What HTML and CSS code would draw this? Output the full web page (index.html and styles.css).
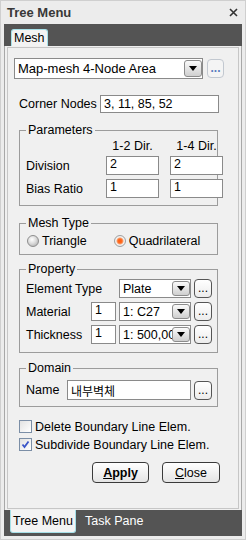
FILE: index.html
```html
<!DOCTYPE html>
<html>
<head>
<meta charset="utf-8">
<link rel="stylesheet" href="styles.css">
</head>
<body>
<div class="window">
  <div class="titlebar">
    <span class="title">Tree Menu</span>
    <svg class="close" width="9" height="9" viewBox="0 0 9 9"><path d="M1 1L8 8M8 1L1 8" stroke="#333" stroke-width="1.6" fill="none"/></svg>
  </div>
  <div class="frame">
    <div class="tabstrip-top"><div class="tab-top">Mesh</div></div>
    <div class="panel">
      <div class="panel-inner">
        <div class="combo-row">
          <div class="combo combo-main"><span class="combo-text">Map-mesh 4-Node Area</span><span class="drop"><i class="tri"></i></span></div>
          <span class="dots dots-disabled">...</span>
        </div>
        <div class="corner-row">
          <span class="corner-label">Corner Nodes</span>
          <span class="input corner-input">3, 11, 85, 52</span>
        </div>

        <fieldset class="group group-params">
          <legend>Parameters</legend>
          <div class="params-body">
            <span></span><span class="dir">1-2 Dir.</span><span class="dir">1-4 Dir.</span>
            <span class="plabel">Division</span><span class="input pinput">2</span><span class="input pinput">2</span>
            <span class="plabel">Bias Ratio</span><span class="input pinput">1</span><span class="input pinput">1</span>
          </div>
        </fieldset>

        <fieldset class="group group-type">
          <legend>Mesh Type</legend>
          <div class="type-body">
            <span class="radio"></span><span class="rtext">Triangle</span>
            <span class="radio on radio-second"></span><span class="rtext">Quadrilateral</span>
          </div>
        </fieldset>

        <fieldset class="group group-prop">
          <legend>Property</legend>
          <div class="prop-body">
            <div class="prow">
              <span class="prlabel wide">Element Type</span>
              <div class="combo combo-small"><span class="combo-text">Plate</span><span class="drop"><i class="tri"></i></span></div>
              <span class="dots">...</span>
            </div>
            <div class="prow">
              <span class="prlabel">Material</span>
              <span class="input small-input">1</span>
              <div class="combo combo-small"><span class="combo-text">1: C27</span><span class="drop"><i class="tri"></i></span></div>
              <span class="dots">...</span>
            </div>
            <div class="prow">
              <span class="prlabel">Thickness</span>
              <span class="input small-input">1</span>
              <div class="combo combo-small"><span class="combo-text">1: 500,00</span><span class="drop"><i class="tri"></i></span></div>
              <span class="dots">...</span>
            </div>
          </div>
        </fieldset>

        <fieldset class="group group-domain">
          <legend>Domain</legend>
          <div class="domain-body">
            <span class="dlabel">Name</span>
            <span class="input name-input">내부벽체</span>
            <span class="dots">...</span>
          </div>
        </fieldset>

        <div class="check-row first">
          <span class="check"></span><span class="ctext">Delete Boundary Line Elem.</span>
        </div>
        <div class="check-row">
          <span class="check checked"><svg width="11" height="11" viewBox="0 0 11 11"><path d="M2.5 5.5L4.5 8L8.5 2.5" stroke="#3a55c8" stroke-width="1.8" fill="none"/></svg></span><span class="ctext">Subdivide Boundary Line Elem.</span>
        </div>

        <div class="button-row">
          <span class="btn btn-apply"><u>A</u>pply</span>
          <span class="btn btn-close"><u>C</u>lose</span>
        </div>
      </div>
    </div>
    <div class="tabstrip-bottom">
      <div class="tab-bottom">Tree Menu</div>
      <span class="tab-other">Task Pane</span>
    </div>
  </div>
</div>
</body>
</html>
```

FILE: styles.css
```css
* { box-sizing: border-box; }
html, body { margin: 0; padding: 0; }
body {
  width: 246px;
  height: 540px;
  overflow: hidden;
  background: #ececec;
  font-family: "Liberation Sans", Arial, "Noto Sans CJK KR", sans-serif;
  font-size: 12.5px;
  color: #000;
}
.window {
  width: 246px;
  height: 540px;
  border: 1px solid #cfcfcf;
  background: #ececec;
  display: flex;
  flex-direction: column;
}
.titlebar {
  height: 23px;
  flex: none;
  display: flex;
  align-items: center;
  justify-content: space-between;
  padding: 0 7px 0 6px;
}
.title { font-weight: bold; color: #383838; font-size: 13px; }
.frame {
  flex: 1;
  margin: 0 3px 3px 3px;
  background: #545454;
  display: flex;
  flex-direction: column;
}
.tabstrip-top {
  height: 22px;
  flex: none;
  display: flex;
  align-items: flex-end;
  padding-left: 7px;
}
.tab-top {
  height: 17px;
  width: 37px;
  background: #f3f3f3;
  border: 1px solid #a6e0e8;
  border-bottom: none;
  border-radius: 3px 3px 0 0;
  padding-left: 2px;
  line-height: 16px;
}
.panel {
  flex: 1;
  display: flex;
  background: #f0f0f0;
  border-left: 1px solid #a8a8a8;
  border-right: 1px solid #a8a8a8;
  padding: 1px 2px;
}
.panel-inner {
  flex: 1;
  border: 1px solid #c6c6c6;
  background: #f0f0f0;
  display: flex;
  flex-direction: column;
}
.combo-row {
  margin: 10px 0 0 6px;
  display: flex;
  align-items: center;
  height: 21px;
}
.combo {
  display: flex;
  background: #fff;
  border: 1px solid #8a8a8a;
  overflow: hidden;
}
.combo-main { width: 189px; height: 21px; font-size: 13px; }
.combo-text {
  flex: 1;
  min-width: 0;
  padding-left: 3px;
  white-space: nowrap;
  overflow: hidden;
  display: flex;
  align-items: center;
}
.drop {
  flex: none;
  width: 18px;
  margin: 1px 0;
  border: 1px solid #8c8c8c;
  border-radius: 3px;
  background: linear-gradient(#fafafa, #cfcfcf);
  display: flex;
  align-items: center;
  justify-content: center;
}
.tri {
  width: 0;
  height: 0;
  border-left: 4px solid transparent;
  border-right: 4px solid transparent;
  border-top: 5px solid #000;
}
.dots {
  flex: none;
  width: 18px;
  height: 19px;
  margin-left: 3px;
  border: 1px solid #555;
  border-radius: 4px;
  background: linear-gradient(#ffffff, #ececec);
  font-size: 12px;
  line-height: 16px;
  text-align: center;
  color: #000;
  letter-spacing: 0;
}
.dots-disabled {
  width: 17px;
  margin-left: 4px;
  border-color: #c2c8d0;
  color: #5b7dc0;
  background: #f4f4f4;
  font-weight: bold;
}
.corner-row {
  margin: 16px 0 0 11px;
  height: 18px;
  display: flex;
  align-items: center;
}
.corner-label { width: 81px; }
.input {
  background: #fff;
  border: 1px solid #8a8a8a;
  padding-left: 3px;
  display: flex;
  align-items: center;
  white-space: nowrap;
  overflow: hidden;
}
.corner-input { width: 119px; height: 18px; }

.group {
  margin: 0 0 0 11px;
  padding: 0;
  width: 199px;
  min-width: 0;
  border: 1px solid #9c9c9c;
}
.group legend {
  padding: 0 2px;
  margin-left: 6px;
  font-size: 12.5px;
  line-height: 14px;
}
.group-params { margin-top: 10px; }
.params-body {
  display: grid;
  grid-template-columns: 69px 53px 53px;
  grid-template-rows: 14px 22px 23px;
  column-gap: 11px;
  row-gap: 0;
  padding: 2px 0 7px 6px;
}
.params-body .dir { text-align: center; line-height: 14px; }
.params-body .plabel { display: flex; align-items: center; }
.params-body > :nth-child(n+4) { margin-top: 3px; }
.params-body > :nth-child(n+7) { margin-top: 4px; }
.pinput { height: 19px; align-items: flex-start; }

.group-type { margin-top: 10px; }
.type-body {
  display: flex;
  align-items: center;
  height: 14px;
  margin: 4px 0 6px 0;
  padding-left: 7px;
}
.radio {
  width: 12px;
  height: 12px;
  border-radius: 50%;
  border: 1px solid #8e8e8e;
  background: radial-gradient(circle at 40% 35%, #ffffff 0, #dcdcdc 45%, #a4a4a4 100%);
  flex: none;
}
.radio.on {
  border-color: #a0a0a0;
  background: radial-gradient(circle, #ff5a10 0, #ff6a20 2px, #f4a070 3px, #f6f6f6 4px, #d4d4d4 100%);
}
.rtext { margin-left: 3px; }
.radio-second { margin-left: 27px; }

.group-prop { margin-top: 7px; }
.prop-body { padding: 3px 0 8px 6px; display: flex; flex-direction: column; gap: 4px; }
.prow { display: flex; align-items: center; height: 19px; }
.prlabel { width: 65px; }
.prlabel.wide { width: 93px; }
.small-input { width: 25px; height: 19px; margin-right: 3px; align-items: flex-start; }
.combo-small { width: 72px; height: 19px; }

.group-domain { margin-top: 8px; }
.domain-body { display: flex; align-items: center; height: 20px; margin: 5px 0 6px 0; padding-left: 6px; }
.dlabel { width: 41px; }
.name-input { width: 124px; height: 20px; font-family: "Noto Sans CJK KR", sans-serif; font-size: 12px; }

.check-row {
  margin: 5px 0 0 11px;
  display: flex;
  align-items: center;
  height: 13px;
}
.check-row.first { margin-top: 13px; }
.check {
  width: 13px;
  height: 13px;
  border: 1px solid #7b8ea6;
  background: linear-gradient(135deg, #e2e2e2, #ffffff);
  flex: none;
  display: flex;
}
.ctext { margin-left: 3px; white-space: nowrap; }

.button-row {
  margin: 11px 0 0 84px;
  display: flex;
  gap: 13px;
}
.btn {
  height: 21px;
  border: 1px solid #3a3a3a;
  border-radius: 4px;
  background: linear-gradient(#ffffff, #e4e4e4);
  display: flex;
  align-items: center;
  justify-content: center;
}
.btn-apply { width: 57px; font-weight: bold; }
.btn-close { width: 58px; }

.tabstrip-bottom {
  height: 26px;
  flex: none;
  display: flex;
  align-items: flex-start;
  padding-left: 6px;
}
.tab-bottom {
  height: 23px;
  width: 66px;
  background: #f3f3f3;
  border: 1px solid #a6e0e8;
  border-top: none;
  border-radius: 0 0 3px 3px;
  padding-left: 2px;
  line-height: 22px;
  white-space: nowrap;
}
.tab-other {
  margin-left: 9px;
  color: #fff;
  line-height: 23px;
}
```
